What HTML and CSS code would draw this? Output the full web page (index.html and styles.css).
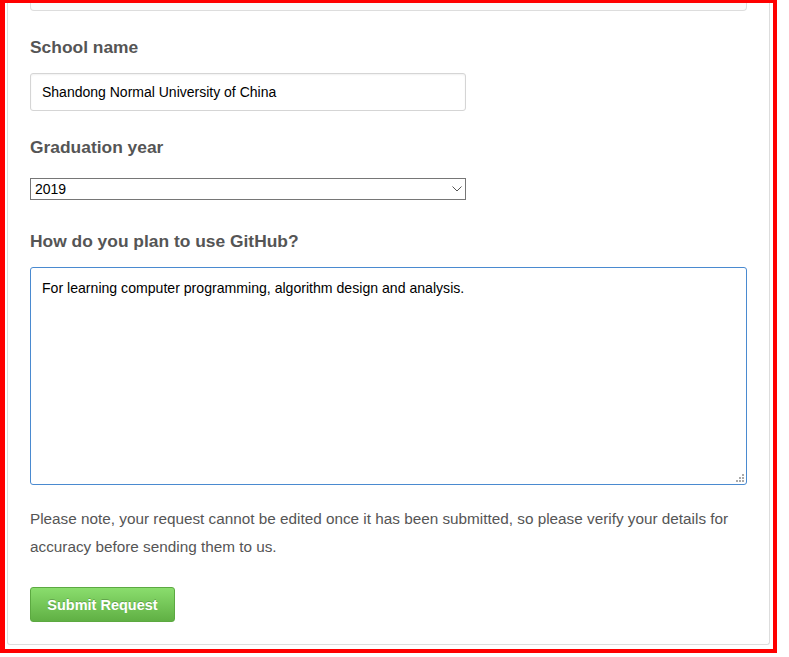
FILE: index.html
```html
<!DOCTYPE html>
<html>
<head>
<meta charset="utf-8">
<link rel="stylesheet" href="styles.css">
</head>
<body>
<div class="frame">
  <div class="panel">
    <div class="prev-box"></div>
    <label class="label label-first" for="school">School name</label>
    <input id="school" class="text-input" type="text" value="Shandong Normal University of China">
    <label class="label label-second" for="year">Graduation year</label>
    <div class="select-wrap">
      <select id="year" class="select"><option>2019</option></select>
      <svg class="chevron" width="10" height="6" viewBox="0 0 10 6"><polyline points="0.5,0.5 5,5 9.5,0.5" fill="none" stroke="#555" stroke-width="1"/></svg>
    </div>
    <label class="label label-third" for="plan">How do you plan to use GitHub?</label>
    <div class="textarea-wrap">
      <textarea id="plan" class="textarea">For learning computer programming, algorithm design and analysis.</textarea>
      <svg class="grip" width="8" height="8" viewBox="0 0 8 8">
        <rect x="6" y="0" width="2" height="2" fill="#aaa"/>
        <rect x="3" y="3" width="2" height="2" fill="#aaa"/>
        <rect x="6" y="3" width="2" height="2" fill="#aaa"/>
        <rect x="0" y="6" width="2" height="2" fill="#aaa"/>
        <rect x="3" y="6" width="2" height="2" fill="#aaa"/>
        <rect x="6" y="6" width="2" height="2" fill="#aaa"/>
      </svg>
    </div>
    <p class="note">Please note, your request cannot be edited once it has been submitted, so please verify your details for accuracy before sending them to us.</p>
    <button class="btn" type="button">Submit Request</button>
  </div>
</div>
</body>
</html>
```
FILE: styles.css
```css
html, body {
  margin: 0;
  padding: 0;
  background: #fff;
}
body {
  font-family: "Liberation Sans", Arial, sans-serif;
  width: 789px;
  height: 657px;
  overflow: hidden;
}
.frame {
  box-sizing: border-box;
  width: 777px;
  height: 653px;
  border-style: solid;
  border-color: #ff0000;
  border-width: 3px 4px 4px 5px;
  padding: 0 3px 4px 2px;
  display: flex;
  flex-direction: column;
}
.panel {
  flex: 1;
  border: 1px solid #ddd;
  border-top: none;
  border-radius: 0 0 3px 3px;
  padding: 0 22px 22px 22px;
  display: flex;
  flex-direction: column;
  align-items: flex-start;
}
.prev-box {
  box-sizing: border-box;
  align-self: stretch;
  height: 8px;
  background: #fafafa;
  border: 1px solid #ddd;
  border-top: none;
  border-radius: 0 0 4px 4px;
}
.label {
  display: block;
  font-size: 17.4px;
  line-height: 20px;
  font-weight: bold;
  color: #555;
}
.label-first { margin-top: 26px; }
.label-second { margin-top: 26px; }
.label-third { margin-top: 31px; }
.text-input {
  box-sizing: border-box;
  margin-top: 16px;
  width: 436px;
  height: 38px;
  padding: 0 11px;
  font-family: "Liberation Sans", Arial, sans-serif;
  font-size: 14px;
  color: #000;
  background: #fff;
  border: 1px solid #d5d5d5;
  border-radius: 3px;
  box-shadow: inset 0 1px 2px rgba(0,0,0,0.06);
  outline: none;
}
.select-wrap {
  position: relative;
  margin-top: 21px;
  width: 436px;
  height: 22px;
}
.select {
  box-sizing: border-box;
  width: 436px;
  height: 22px;
  margin: 0;
  padding: 0 0 0 4px;
  font-family: "Liberation Sans", Arial, sans-serif;
  font-size: 14px;
  color: #000;
  background: #fff;
  border: 1px solid #767676;
  border-radius: 0;
  -webkit-appearance: none;
  appearance: none;
  outline: none;
}
.chevron {
  position: absolute;
  right: 4px;
  top: 8px;
}
.textarea-wrap {
  position: relative;
  margin-top: 16px;
  align-self: stretch;
  height: 218px;
}
.textarea {
  box-sizing: border-box;
  display: block;
  width: 100%;
  height: 218px;
  margin: 0;
  padding: 12px 11px;
  font-family: "Liberation Sans", Arial, sans-serif;
  font-size: 14.1px;
  line-height: 16px;
  color: #000;
  border: 1px solid #4a8ad0;
  border-radius: 3px;
  outline: none;
  resize: none;
}
.grip {
  position: absolute;
  right: 3px;
  bottom: 3px;
}
.note {
  margin: 20px 0 0 0;
  font-size: 15.3px;
  line-height: 28px;
  color: #555;
}
.btn {
  box-sizing: border-box;
  margin-top: 26px;
  width: 145px;
  height: 35px;
  padding: 0;
  font-family: "Liberation Sans", Arial, sans-serif;
  font-size: 14.5px;
  font-weight: bold;
  color: #fff;
  text-shadow: 0 -1px 0 rgba(0,0,0,0.2);
  background: linear-gradient(#8add6d, #60b044);
  border: 1px solid #5ca941;
  border-radius: 3px;
}
```
